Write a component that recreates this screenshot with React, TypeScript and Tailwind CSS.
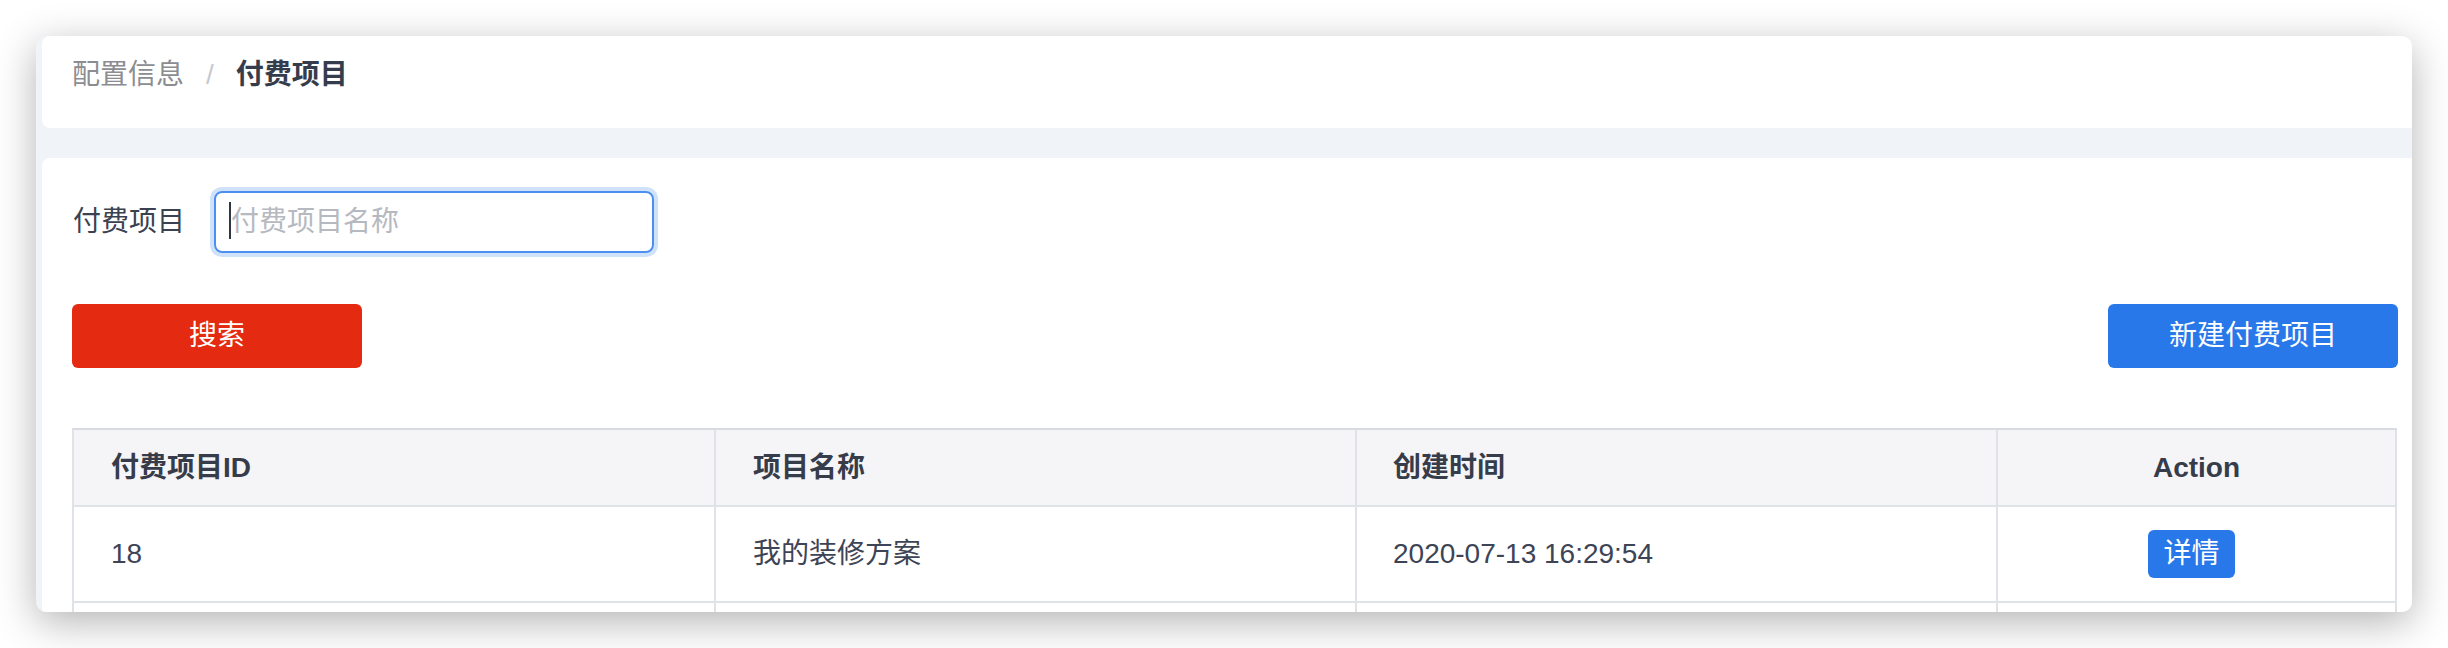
import { useState } from "react";

type FeeRow = {
  id: string;
  name: string;
  createdAt: string;
};

const rows: FeeRow[] = [{ id: "18", name: "我的装修方案", createdAt: "2020-07-13 16:29:54" }];

const cols = "grid grid-cols-[642px_641px_641px_1fr]";

export default function App() {
  const [keyword, setKeyword] = useState("");

  return (
    <div className="min-h-screen w-full bg-white px-[36px] pt-[36px] font-['Liberation_Sans','Noto_Sans_CJK_SC',sans-serif] text-[28px] text-[#3d4455]">
      <div className="flex h-[576px] w-[2376px] flex-col overflow-hidden rounded-[10px] bg-[#f0f3f7] pl-[6px] shadow-[0_10px_40px_rgba(0,0,0,0.3)]">
        {/* Breadcrumb */}
        <div className="h-[92px] shrink-0 rounded-l-[8px] bg-white pl-[30px] pt-[25px]">
          <div className="flex items-center leading-[28px]">
            <span className="text-[#8b8d91]">配置信息</span>
            <span className="mx-[22px] text-[#c6cad0]">/</span>
            <span className="font-semibold text-[#353c4b]">付费项目</span>
          </div>
        </div>

        {/* Content card */}
        <div className="mt-[30px] flex-1 rounded-tl-[8px] bg-white pl-[30px] pr-[14px] pt-[33px]">
          <div className="flex items-center">
            <label className="mr-[29px] pl-px leading-[28px] text-[#3a4150]">付费项目</label>
            <div className="relative">
              <input
                value={keyword}
                onChange={(e) => setKeyword(e.target.value)}
                placeholder="付费项目名称"
                className="h-[62px] w-[440px] rounded-[8px] border-2 border-[#4b8ff0] pl-[15px] text-[28px] text-[#3a4150] shadow-[0_0_0_4px_#cfe2fa] outline-none placeholder:text-[#b6b9c0]"
              />
              <span className="absolute left-[15px] top-[11px] h-[37px] w-[2px] bg-[#2f3644]" />
            </div>
          </div>

          <div className="mt-[51px] flex items-center justify-between">
            <button className="h-[64px] w-[290px] rounded-[6px] bg-[#e42a10] text-[28px] text-white">搜索</button>
            <button className="h-[64px] w-[290px] rounded-[6px] bg-[#2878ea] text-[28px] text-white">新建付费项目</button>
          </div>

          {/* Table */}
          <div className="mt-[60px] w-[2325px] border-l-2 border-t-2 border-l-[#dfe2e6] border-t-[#d7dae0]">
            <div className={`${cols} h-[77px] bg-[#f5f5f7] font-semibold text-[#363c4a]`}>
              <div className="flex items-center border-b-2 border-r-2 border-[#dfe2e6] pl-[37px]">付费项目ID</div>
              <div className="flex items-center border-b-2 border-r-2 border-[#dfe2e6] pl-[37px]">项目名称</div>
              <div className="flex items-center border-b-2 border-r-2 border-[#dfe2e6] pl-[36px]">创建时间</div>
              <div className="flex items-center justify-center border-b-2 border-r-2 border-[#dfe2e6]">Action</div>
            </div>
            {rows.map((row) => (
              <div key={row.id} className={`${cols} h-[96px]`}>
                <div className="flex items-center border-b-2 border-r-2 border-[#dfe2e6] pl-[37px]">{row.id}</div>
                <div className="flex items-center border-b-2 border-r-2 border-[#dfe2e6] pl-[37px]">{row.name}</div>
                <div className="flex items-center border-b-2 border-r-2 border-[#dfe2e6] pl-[36px]">{row.createdAt}</div>
                <div className="flex items-center justify-center border-b-2 border-r-2 border-[#dfe2e6]">
                  <button className="-ml-[10px] h-[48px] w-[87px] rounded-[6px] bg-[#2878ea] text-[28px] leading-none text-white">详情</button>
                </div>
              </div>
            ))}
            <div className={`${cols} h-[96px]`}>
              <div className="border-b-2 border-r-2 border-[#dfe2e6]" />
              <div className="border-b-2 border-r-2 border-[#dfe2e6]" />
              <div className="border-b-2 border-r-2 border-[#dfe2e6]" />
              <div className="border-b-2 border-r-2 border-[#dfe2e6]" />
            </div>
          </div>
        </div>
      </div>
    </div>
  );
}
